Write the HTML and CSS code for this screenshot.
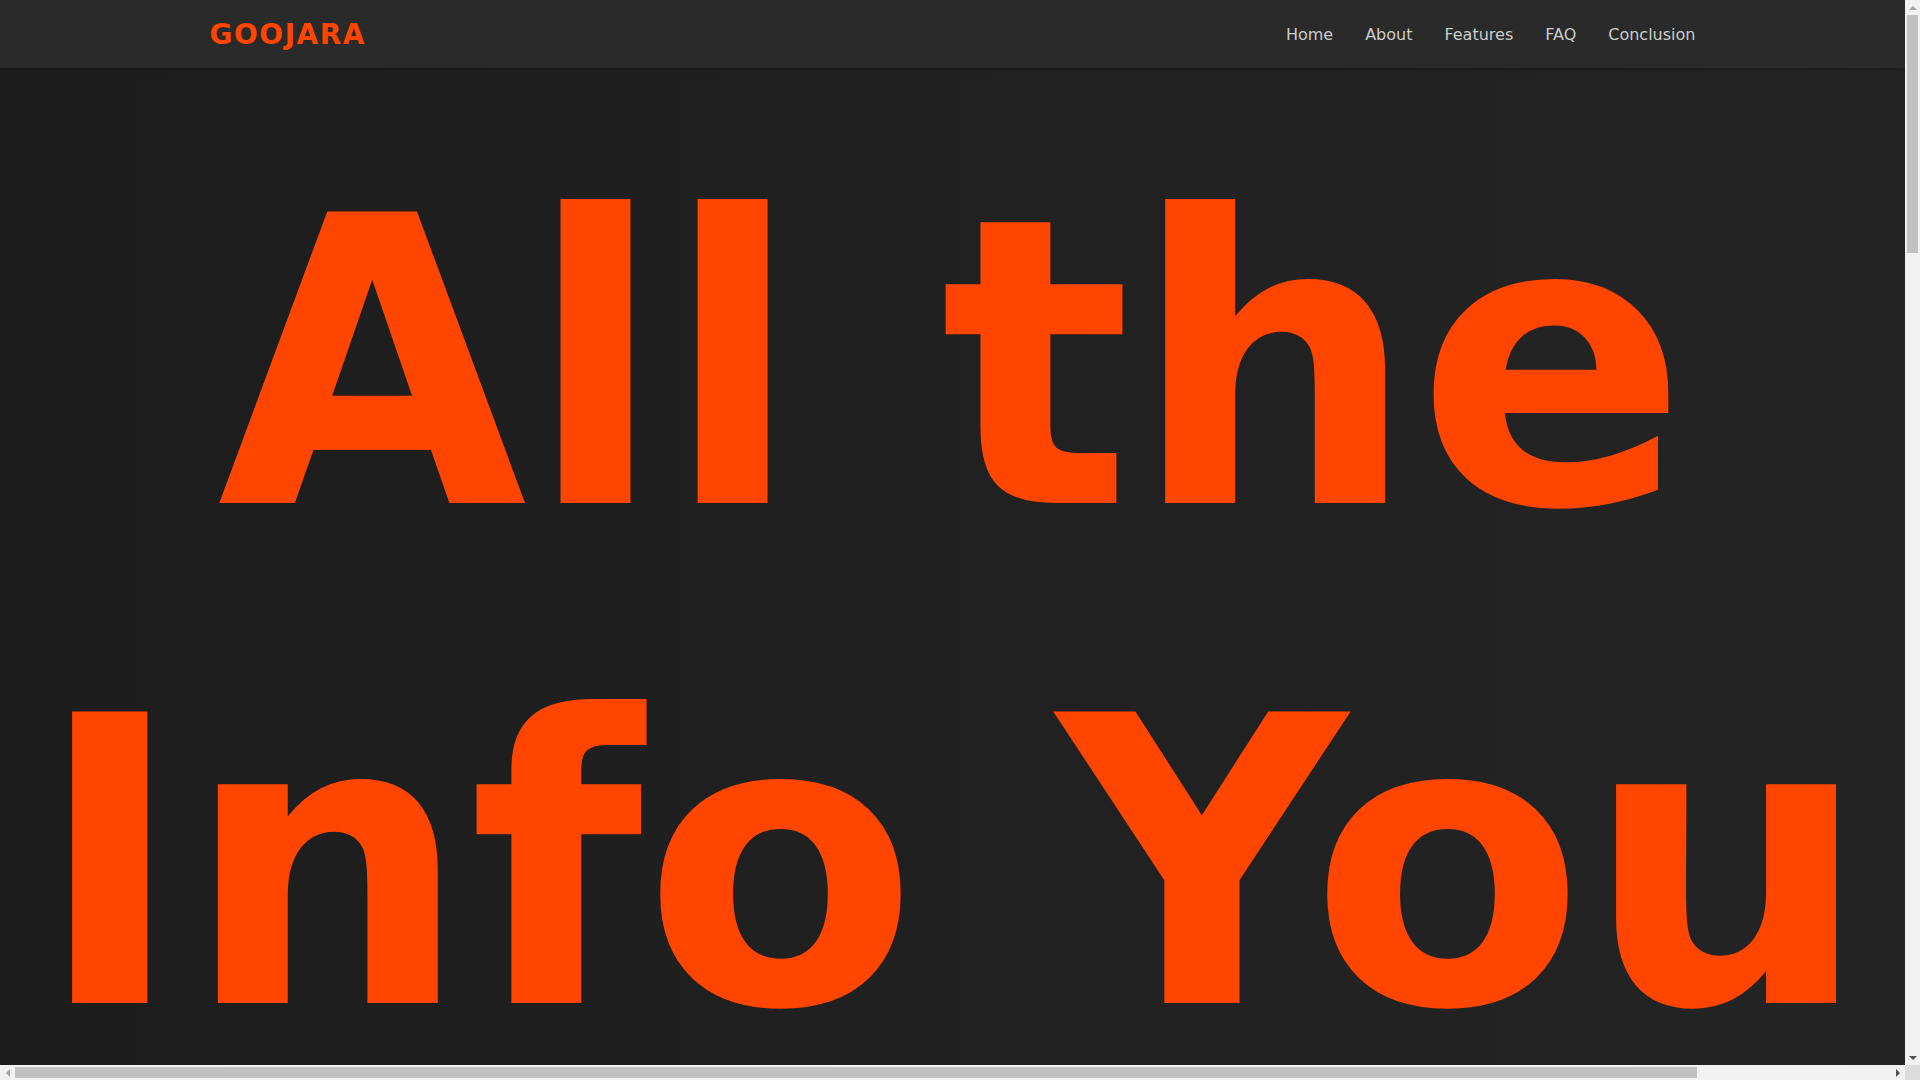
FILE: index.html
```html
<!DOCTYPE html>
<html lang="en">
<head>
<meta charset="utf-8">
<title>Goojara - All the Info You Need</title>
<link rel="stylesheet" href="styles.css">
</head>
<body>
<div class="app">
  <div class="viewport">
    <header class="site-header">
      <div class="container header-inner">
        <a class="logo" href="#home">GOOJARA</a>
        <nav class="nav">
          <a class="nav-link" href="#home">Home</a>
          <a class="nav-link" href="#about">About</a>
          <a class="nav-link" href="#features">Features</a>
          <a class="nav-link" href="#faq">FAQ</a>
          <a class="nav-link" href="#conclusion">Conclusion</a>
        </nav>
      </div>
    </header>
    <main>
      <section class="hero" id="home">
        <h1 class="hero-title">All the Info You Need</h1>
        <p class="hero-sub">Everything you want to know about Goojara, in one place.</p>
      </section>
      <section class="section" id="about">
        <div class="container">
          <h2 class="section-title">About Goojara</h2>
          <p class="section-text">Goojara is a popular website for streaming movies and TV shows online. Here we collect the most important facts about how it works.</p>
          <div class="ticker">
            <span class="tag">Movies</span><span class="tag">TV Shows</span><span class="tag">Streaming</span><span class="tag">Free Access</span><span class="tag">HD Quality</span><span class="tag">Safety</span><span class="tag">Alternatives</span><span class="tag">Legal Notes</span>
          </div>
        </div>
      </section>
      <section class="section" id="features">
        <div class="container">
          <h2 class="section-title">Features</h2>
          <p class="section-text">A large library, a simple interface and fast search are the features users mention most often.</p>
        </div>
      </section>
      <section class="section" id="faq">
        <div class="container">
          <h2 class="section-title">FAQ</h2>
          <p class="section-text">Answers to the questions people ask most about Goojara.</p>
        </div>
      </section>
      <section class="section" id="conclusion">
        <div class="container">
          <h2 class="section-title">Conclusion</h2>
          <p class="section-text">Use any streaming service wisely and respect the laws of your country.</p>
        </div>
      </section>
    </main>
    <footer class="site-footer">
      <div class="container">© Goojara Info</div>
    </footer>
  </div>

  <div class="vscroll" aria-hidden="true">
    <div class="sb-btn"><span class="arrow arrow-up"></span></div>
    <div class="vtrack"><div class="vthumb"></div></div>
    <div class="sb-btn"><span class="arrow arrow-down"></span></div>
  </div>
  <div class="hscroll" aria-hidden="true">
    <div class="sb-btn"><span class="arrow arrow-left"></span></div>
    <div class="htrack"><div class="hthumb"></div></div>
    <div class="sb-btn"><span class="arrow arrow-right"></span></div>
  </div>
  <div class="sb-corner" aria-hidden="true"></div>
</div>
</body>
</html>
```

FILE: styles.css
```css
html, body {
  margin: 0;
  padding: 0;
  height: 100%;
  overflow: hidden;
}

body {
  font-family: "DejaVu Sans", "Noto Sans", sans-serif;
  background: #1f1f1f;
  color: #cccccc;
}

/* window: content area + classic scrollbars */
.app {
  display: grid;
  grid-template-columns: 1fr 15px;
  grid-template-rows: 1fr 15px;
  height: 100vh;
  width: 100vw;
  overflow: hidden;
}

.viewport {
  overflow: hidden;
  min-width: 0;
  min-height: 0;
}

.vscroll {
  display: flex;
  flex-direction: column;
  background: #f1f1f1;
}

.hscroll {
  display: flex;
  background: #f1f1f1;
}

.sb-corner {
  background: #dcdcdc;
}

.sb-btn {
  flex: 0 0 15px;
  width: 15px;
  height: 15px;
  display: flex;
  align-items: center;
  justify-content: center;
}

.vtrack {
  flex: 1;
  display: flex;
  flex-direction: column;
}

.vthumb {
  height: 238px;
  margin: 0 2px;
  background: #c1c1c1;
}

.htrack {
  flex: 1;
  display: flex;
  align-items: center;
}

.hthumb {
  width: 1682px;
  height: 11px;
  background: #c1c1c1;
}

.arrow {
  width: 0;
  height: 0;
}

.arrow-up {
  border-left: 4px solid transparent;
  border-right: 4px solid transparent;
  border-bottom: 4px solid #a3a3a3;
}

.arrow-down {
  border-left: 4px solid transparent;
  border-right: 4px solid transparent;
  border-top: 4px solid #505050;
}

.arrow-left {
  border-top: 4px solid transparent;
  border-bottom: 4px solid transparent;
  border-right: 4px solid #a3a3a3;
}

.arrow-right {
  border-top: 4px solid transparent;
  border-bottom: 4px solid transparent;
  border-left: 4px solid #505050;
}

/* page */
.container {
  width: 78%;
  margin: 0 auto;
}

.site-header {
  background: #2a2a2a;
  height: 68px;
  box-shadow: 0 1px 3px rgba(0, 0, 0, 0.35);
  position: relative;
  z-index: 2;
}

.header-inner {
  height: 100%;
  display: flex;
  align-items: center;
  justify-content: space-between;
}

.logo {
  color: #ff4500;
  font-weight: 700;
  font-size: 28px;
  letter-spacing: 1.5px;
  text-decoration: none;
}

.nav {
  display: flex;
  gap: 32px;
}

.nav-link {
  color: #cccccc;
  font-size: 16px;
  text-decoration: none;
}

.hero {
  background: linear-gradient(90deg, #1d1d1d 0%, #242424 100%);
  padding: 47px 0 100px;
}

.hero-title {
  margin: 0;
  color: #ff4500;
  font-weight: 700;
  font-size: 400px;
  line-height: 1.25;
  text-align: center;
}

.hero-sub {
  margin: 40px 0 0;
  text-align: center;
  font-size: 24px;
  color: #bbbbbb;
}

.section {
  box-sizing: border-box;
  min-height: 690px;
  padding: 80px 0;
  background: #1f1f1f;
}

.section-title {
  margin: 0 0 24px;
  color: #ff4500;
  font-size: 40px;
}

.section-text {
  margin: 0;
  font-size: 18px;
  line-height: 1.6;
}

.ticker {
  width: 2124px;
  margin-top: 40px;
  display: flex;
  gap: 16px;
}

.tag {
  padding: 8px 16px;
  border: 1px solid #ff4500;
  border-radius: 20px;
  color: #ff4500;
  font-size: 15px;
}

.site-footer {
  background: #2a2a2a;
  padding: 30px 0;
  text-align: center;
  font-size: 14px;
}
```
